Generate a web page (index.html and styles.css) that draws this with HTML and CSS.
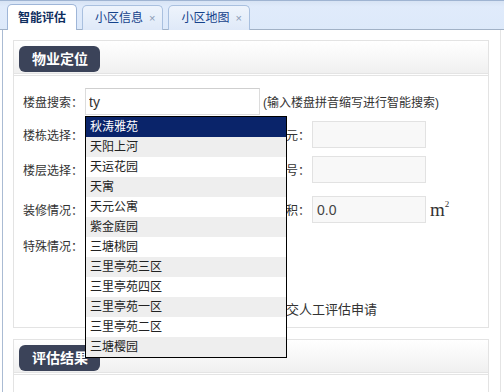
FILE: index.html
```html
<!DOCTYPE html>
<html lang="zh-CN">

<head>
  <meta charset="UTF-8" />
  <title>智能评估</title>
  <link rel="stylesheet" href="styles.css">
</head>

<body>
  <!-- top tab strip -->
  <div class="tabs">
    <div class="tab active">智能评估</div>
    <div class="tab">小区信息<span class="close">×</span></div>
    <div class="tab">小区地图<span class="close">×</span></div>
  </div>

  <div class="main">
    <div class="panel">
      <div class="panel-head"><span class="badge">物业定位</span></div>
      <div class="panel-body">
        <div class="row row-search">
          <label>楼盘搜索：</label>
          <input class="search" type="text" value="ty" />
          <span class="hint">(输入楼盘拼音缩写进行智能搜索)</span>

          <ul class="suggest">
            <li class="on">秋涛雅苑</li>
            <li>天阳上河</li>
            <li>天运花园</li>
            <li>天寓</li>
            <li>天元公寓</li>
            <li>紫金庭园</li>
            <li>三塘桃园</li>
            <li>三里亭苑三区</li>
            <li>三里亭苑四区</li>
            <li>三里亭苑一区</li>
            <li>三里亭苑二区</li>
            <li>三塘樱园</li>
          </ul>
        </div>

        <div class="row row-build">
          <label>楼栋选择：</label>
          <div class="field"></div>
          <label class="sub">单元：</label>
          <input class="box" type="text" />
        </div>

        <div class="row row-floor">
          <label>楼层选择：</label>
          <div class="field"></div>
          <label class="sub">房号：</label>
          <input class="box" type="text" />
        </div>

        <div class="row row-deco">
          <label>装修情况：</label>
          <div class="field"></div>
          <label class="sub">面积：</label>
          <input class="box" type="text" value="0.0" />
          <span class="unit">m<sup>2</sup></span>
        </div>

        <div class="row row-special">
          <label>特殊情况：</label>
        </div>

        <div class="row row-submit">
          <span class="apply">提交人工评估申请</span>
        </div>
      </div>
    </div>

    <div class="panel panel-result">
      <div class="panel-head"><span class="badge">评估结果</span></div>
      <div class="panel-body result-body"></div>
    </div>
  </div>
</body>

</html>
```

FILE: styles.css
```css
* {
  margin: 0;
  padding: 0;
  box-sizing: border-box;
}

body {
  font-family: "Liberation Sans", "Noto Sans CJK SC", sans-serif;
  font-size: 12px;
  color: #333;
  background: #fff;
  overflow: hidden;
}

/* tab strip */
.tabs {
  height: 30px;
  display: flex;
  align-items: flex-end;
  gap: 5px;
  padding-left: 7px;
  background: linear-gradient(#d7e3f4, #e0ebfb 20%, #dde9fa);
  border-top: 1px solid #9fb4d2;
  border-bottom: 1px solid #a1b1c6;
}

.tab {
  height: 25px;
  display: flex;
  align-items: center;
  padding: 0 7px 0 12px;
  margin-bottom: -1px;
  border: 1px solid #a9c0df;
  border-bottom: none;
  border-radius: 5px 5px 0 0;
  background: linear-gradient(#eef4fc, #dfe9f8);
  color: #15428b;
  line-height: 1;
}

.tab .close {
  margin-left: 6px;
  color: #8a9bb5;
  font-size: 11px;
}

.tab.active {
  height: 26px;
  padding: 0 10px;
  background: #fff;
  font-weight: bold;
  color: #0f2e5e;
  border-color: #9fb6d8;
}

/* content area */
.main {
  margin: 0 3px 0 2px;
  border-left: 1px solid #aabbd3;
  border-right: 1px solid #e4e4e4;
  padding: 10px 11px 0 10px;
  height: 362px;
}

.panel {
  border: 1px solid #e3e3e3;
}

.panel-head {
  padding: 5px 5px 1px;
  background: linear-gradient(#fff, #f0f0f0);
  border-bottom: 3px double #e4e4e4;
}

.badge {
  display: inline-block;
  height: 26px;
  line-height: 26px;
  padding: 0 12px 0 13px;
  border-radius: 6px;
  background: #3b4359;
  color: #fff;
  font-size: 14px;
  font-weight: bold;
}

.panel-body {
  padding: 12px 9px 5px;
}

.row {
  display: flex;
  align-items: center;
  height: 27px;
  margin-bottom: 8px;
}

.row label {
  width: 62px;
  flex: none;
}

.row-search {
  position: relative;
  margin-bottom: 5px;
}

.row-build {
  height: 28px;
}

.row-floor {
  margin-bottom: 13px;
}

.row-special {
  height: 28px;
  margin-bottom: 35px;
}

.row-submit {
  height: 28px;
  margin-bottom: 0;
  padding-left: 250px;
  font-size: 13px;
}

.search {
  width: 175px;
  height: 27px;
  padding-left: 3px;
  border: 1px solid #dcdcdc;
  border-top-color: #cfcfcf;
  background: #fff;
  font-family: inherit;
  font-size: 14px;
  color: #333;
}

.hint {
  margin-left: 3px;
}

.field {
  width: 150px;
  height: 27px;
}

.row label.sub {
  width: 77px;
  text-align: right;
  padding-right: 2px;
}

.box {
  width: 114px;
  height: 27px;
  padding-left: 4px;
  border: 1px solid #e2e2e2;
  background: #f8f8f8;
  font-family: inherit;
  font-size: 14px;
  color: #444;
}

.unit {
  margin-left: 4px;
  align-self: flex-start;
  font-family: "Liberation Serif", serif;
  font-size: 19px;
  color: #333;
  line-height: 1;
  margin-top: 4px;
}

.unit sup {
  font-size: 9px;
  vertical-align: 9px;
}

/* autocomplete list */
.suggest {
  position: absolute;
  top: 28px;
  left: 62px;
  width: 202px;
  z-index: 10;
  list-style: none;
  border: 1px solid #000;
  background: #fff;
}

.suggest li {
  height: 20px;
  line-height: 20px;
  padding-left: 4px;
  color: #222;
  white-space: nowrap;
}

.suggest li:nth-child(even) {
  background: #eee;
}

.suggest li.on {
  background: #0a246a;
  color: #fff;
}

.panel-result {
  margin-top: 11px;
}

.result-body {
  height: 60px;
}
```
